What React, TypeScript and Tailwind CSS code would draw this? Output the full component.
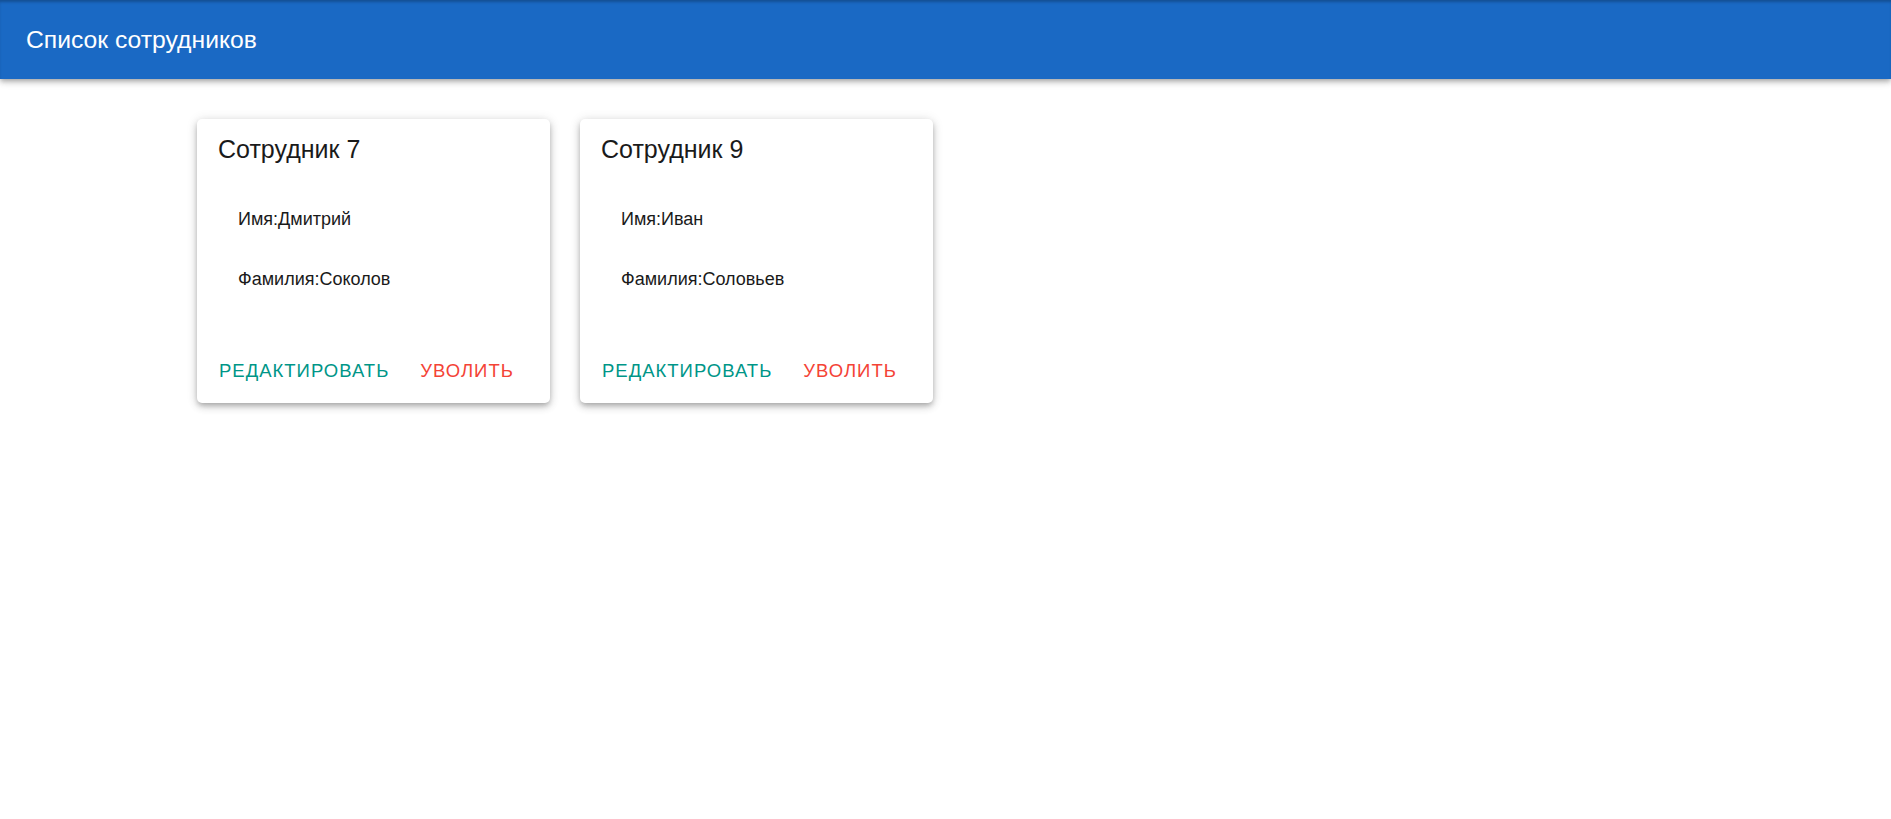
import React from 'react';

type Employee = { id: number; firstName: string; lastName: string };

const EMPLOYEES: Employee[] = [
  { id: 7, firstName: 'Дмитрий', lastName: 'Соколов' },
  { id: 9, firstName: 'Иван', lastName: 'Соловьев' },
];

const EmployeeCard: React.FC<{ employee: Employee }> = ({ employee }) => (
  <div className="w-[353px] h-[284px] bg-white rounded-[5px] shadow-[0_3px_5px_-1px_rgba(0,0,0,0.2),0_4px_8px_0_rgba(0,0,0,0.14),0_1px_12px_0_rgba(0,0,0,0.12)] flex flex-col">
    <div className="pt-[15px] px-[21px]">
      <h2 className="text-[25px] leading-[30px] text-[#1a1a1a]">Сотрудник {employee.id}</h2>
      <ul className="mt-[25px] pl-[20px] text-[18px] leading-[24px] text-[#1a1a1a]">
        <li className="py-[18px]">Имя:{employee.firstName}</li>
        <li className="py-[18px]">Фамилия:{employee.lastName}</li>
      </ul>
    </div>
    <div className="mt-auto pb-[20px] px-[22px] flex gap-[31px]">
      <button className="text-[18.5px] leading-[24px] tracking-[1px] uppercase text-[#009688]">Редактировать</button>
      <button className="text-[18.5px] leading-[24px] tracking-[1px] uppercase text-[#f44336]">Уволить</button>
    </div>
  </div>
);

export default function App() {
  return (
    <div className="min-h-screen bg-white font-['Liberation_Sans',Arial,sans-serif]">
      <header className="h-[79px] bg-[#1a69c4] flex items-center px-[26px] shadow-[inset_0_3px_3px_-1px_rgba(0,0,0,0.25),0_2px_4px_-1px_rgba(0,0,0,0.2),0_4px_5px_0_rgba(0,0,0,0.14),0_1px_10px_0_rgba(0,0,0,0.12)] relative">
        <h1 className="text-[24.7px] leading-[30px] text-white">Список сотрудников</h1>
      </header>
      <main className="pt-[40px] pl-[197px] flex gap-[30px]">
        {EMPLOYEES.map(e => <EmployeeCard key={e.id} employee={e} />)}
      </main>
    </div>
  );
}
